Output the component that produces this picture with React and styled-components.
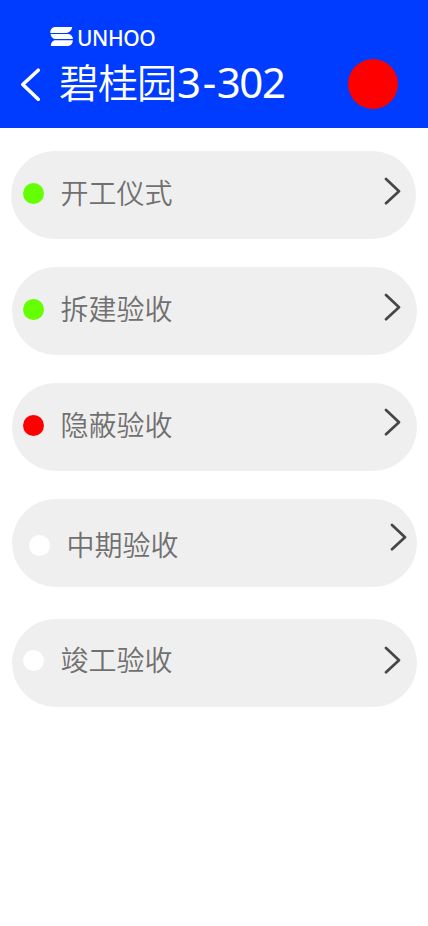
import React from "react";
import styled, { createGlobalStyle } from "styled-components";

const GlobalStyle = createGlobalStyle`
  * { box-sizing: border-box; }
  body {
    margin: 0;
    background: #ffffff;
    font-family: "Noto Sans", "Noto Sans CJK SC", sans-serif;
  }
`;

const Screen = styled.div`
  width: 428px;
  min-height: 926px;
  background: #ffffff;
`;

const Header = styled.header`
  display: flex;
  justify-content: space-between;
  height: 128px;
  padding: 26px 30px 0 20px;
  background: #003cff;
  color: #ffffff;
`;

const Brand = styled.div`
  display: flex;
  gap: 3px;
  height: 26px;
  padding-left: 30px;
`;

const BrandName = styled.span`
  font-size: 21px;
  font-weight: 500;
  letter-spacing: -0.4px;
  line-height: 25px;
  white-space: nowrap;
`;

const TitleRow = styled.div`
  display: flex;
  gap: 18px;
  height: 60px;
`;

const BackButton = styled.button`
  display: block;
  width: 21px;
  height: 34px;
  margin-top: 16px;
  padding: 0;
  border: 0;
  background: none;
  color: inherit;
  svg { display: block; }
`;

const Title = styled.h1`
  display: flex;
  margin: 0;
  font-weight: 400;
  line-height: 60px;
  white-space: nowrap;
`;

const Estate = styled.span`
  margin-top: -1px;
  font-family: "Noto Sans CJK SC", sans-serif;
  font-size: 40px;
  font-weight: 350;
  letter-spacing: -1px;
`;

const Room = styled.span`
  padding-left: 1px;
  font-size: 42px;
  letter-spacing: -1.4px;
`;

const Dash = styled.span`
  padding: 0 2px 0 3px;
`;

const Alert = styled.span`
  width: 50px;
  height: 50px;
  margin-top: 33px;
  border-radius: 50%;
  background: #ff0000;
`;

const List = styled.ul`
  display: flex;
  flex-direction: column;
  margin: 0;
  padding: 23px 11px 0 12px;
  list-style: none;
`;

const Stage = styled.li`
  display: flex;
  width: 405px;
  height: 88px;
  margin: 0 0 ${({ $gap }) => $gap ?? 28}px ${({ $shift }) => $shift ?? 0}px;
  padding: 0 ${({ $end }) => $end ?? 16}px 0 ${({ $start }) => $start ?? 11}px;
  border-radius: 44px;
  background: #efefef;
`;

const Status = styled.span`
  width: 21px;
  height: 21px;
  margin-top: ${({ $top }) => $top}px;
  border-radius: 50%;
  background: ${({ $color }) => $color};
`;

const Label = styled.span`
  flex: 1;
  margin: ${({ $top }) => $top}px 0 0 16.5px;
  color: #707070;
  font-family: "Noto Sans CJK SC", sans-serif;
  font-size: 28px;
  font-weight: 350;
  line-height: 40px;
`;

const Arrow = styled.svg`
  display: block;
  width: 17px;
  height: 28px;
  margin-top: ${({ $top }) => $top}px;
`;

const stages = [
  { name: "开工仪式", color: "#66ff00", dot: 32, label: 21, arrow: 26, shift: -1, start: 12, end: 15 },
  { name: "拆建验收", color: "#66ff00", dot: 32, label: 21, arrow: 26 },
  { name: "隐蔽验收", color: "#ff0000", dot: 32, label: 21, arrow: 25 },
  { name: "中期验收", color: "#ffffff", dot: 36, label: 25, arrow: 24, start: 17, end: 10, gap: 32 },
  { name: "竣工验收", color: "#ffffff", dot: 31, label: 20, arrow: 27 },
];

export default function App() {
  return (
    <Screen>
      <GlobalStyle />
      <Header>
        <div>
          <Brand>
            <svg width="24" height="22" viewBox="0 0 24 22" fill="#ffffff" aria-hidden="true">
              <path d="M4.5 1H22.2Q21.6 5.8 17 6.9H.2Q.1 2 4.5 1Z" />
              <path d="M.6 8H18.5Q22.6 8.8 22.9 13H5Q1 12.2.6 8Z" />
              <path d="M4.5 14.2H22.9Q22.7 18.9 18.5 19.9H.8Q1 15.3 4.5 14.2Z" />
            </svg>
            <BrandName>UNHOO</BrandName>
          </Brand>
          <TitleRow>
            <BackButton aria-label="返回">
              <svg width="21" height="34" viewBox="0 0 21 34" fill="none" stroke="#ffffff" strokeWidth="3.6" strokeLinecap="round" strokeLinejoin="round">
                <path d="M18.2 2.2 2.8 16.5 18.2 31.2" />
              </svg>
            </BackButton>
            <Title>
              <Estate>碧桂园</Estate>
              <Room>3<Dash>-</Dash>302</Room>
            </Title>
          </TitleRow>
        </div>
        <Alert />
      </Header>
      <List>
        {stages.map((s) => (
          <Stage key={s.name} $shift={s.shift} $start={s.start} $end={s.end} $gap={s.gap}>
            <Status $color={s.color} $top={s.dot} />
            <Label $top={s.label}>{s.name}</Label>
            <Arrow $top={s.arrow} viewBox="0 0 17 28" fill="none" stroke="#464646" strokeWidth="2.7" strokeLinecap="round" strokeLinejoin="round">
              <path d="M2 2 15 14.2 2 26.2" />
            </Arrow>
          </Stage>
        ))}
      </List>
    </Screen>
  );
}
